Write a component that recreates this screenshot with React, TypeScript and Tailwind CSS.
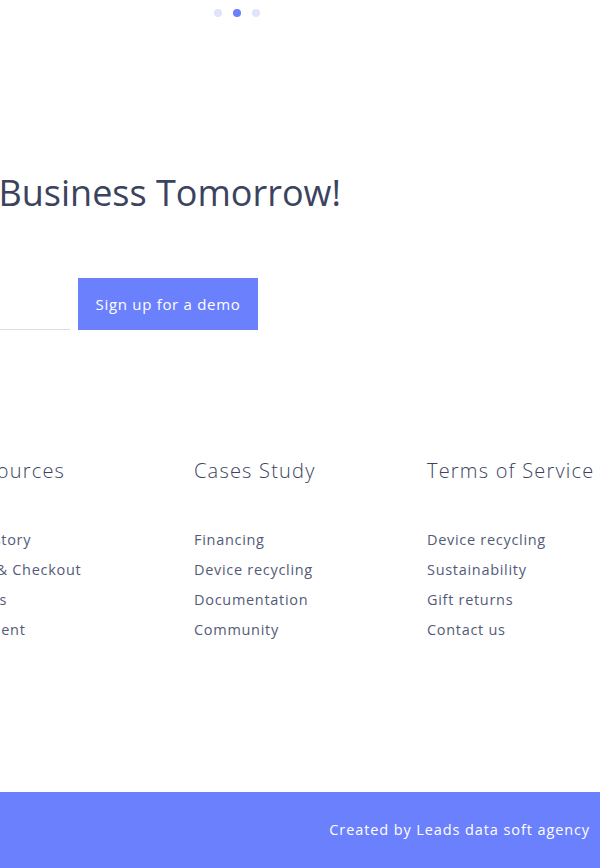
import React from 'react';

const columns = [
  { title: 'Resources', links: ['Our story', 'Cart & Checkout', 'Offers', 'Payment'] },
  { title: 'Cases Study', links: ['Financing', 'Device recycling', 'Documentation', 'Community'] },
  { title: 'Terms of Service', links: ['Device recycling', 'Sustainability', 'Gift returns', 'Contact us'] },
];

const App = () => {
  return (
    <div
      className="w-[600px] h-[868px] overflow-hidden bg-white flex flex-col"
      style={{ fontFamily: '"Open Sans", "Noto Sans", sans-serif' }}
    >
      {/* slider dots */}
      <div className="flex items-center gap-[11px] pl-[214px] pt-[9px]">
        <span className="w-2 h-2 rounded-full bg-[#e1e3fc]" />
        <span className="w-2 h-2 rounded-full bg-[#6b80fc]" />
        <span className="w-2 h-2 rounded-full bg-[#e1e3fc]" />
      </div>

      {/* heading */}
      <div className="flex justify-end w-[341px] mt-[154px]">
        <h2 className="whitespace-nowrap text-[36px] leading-[44px] text-[#3b435e] font-normal">
          Start Growing Your Business Tomorrow!
        </h2>
      </div>

      {/* signup */}
      <div className="flex justify-end items-end gap-2 w-[258px] mt-[63px]">
        <input
          className="w-[300px] shrink-0 h-[52px] border-b border-[#dddddd] outline-none text-sm"
          placeholder=""
        />
        <button className="shrink-0 w-[180px] h-[52px] bg-[#6b80fc] text-white text-[15px] font-medium tracking-[0.7px]">
          Sign up for a demo
        </button>
      </div>

      {/* footer columns */}
      <div className="flex -ml-[39px] mt-[127px]">
        {columns.map((col) => (
          <div key={col.title} className="w-[233px] shrink-0">
            <h3 className="whitespace-nowrap text-[20px] leading-[28px] text-[#3b435e] font-light tracking-[1.2px]">
              {col.title}
            </h3>
            <ul className="mt-[44px] flex flex-col gap-[9px]">
              {col.links.map((l) => (
                <li
                  key={l}
                  className="whitespace-nowrap text-[14.5px] leading-[21px] text-[#545b78] tracking-[0.7px]"
                >
                  {l}
                </li>
              ))}
            </ul>
          </div>
        ))}
      </div>

      {/* bottom bar */}
      <div className="mt-auto h-[76px] bg-[#6b80fc] flex items-center justify-end pr-[10px]">
        <p className="text-white text-[14.5px] font-medium tracking-[0.9px]">Created by Leads data soft agency</p>
      </div>
    </div>
  );
};

export default App;
